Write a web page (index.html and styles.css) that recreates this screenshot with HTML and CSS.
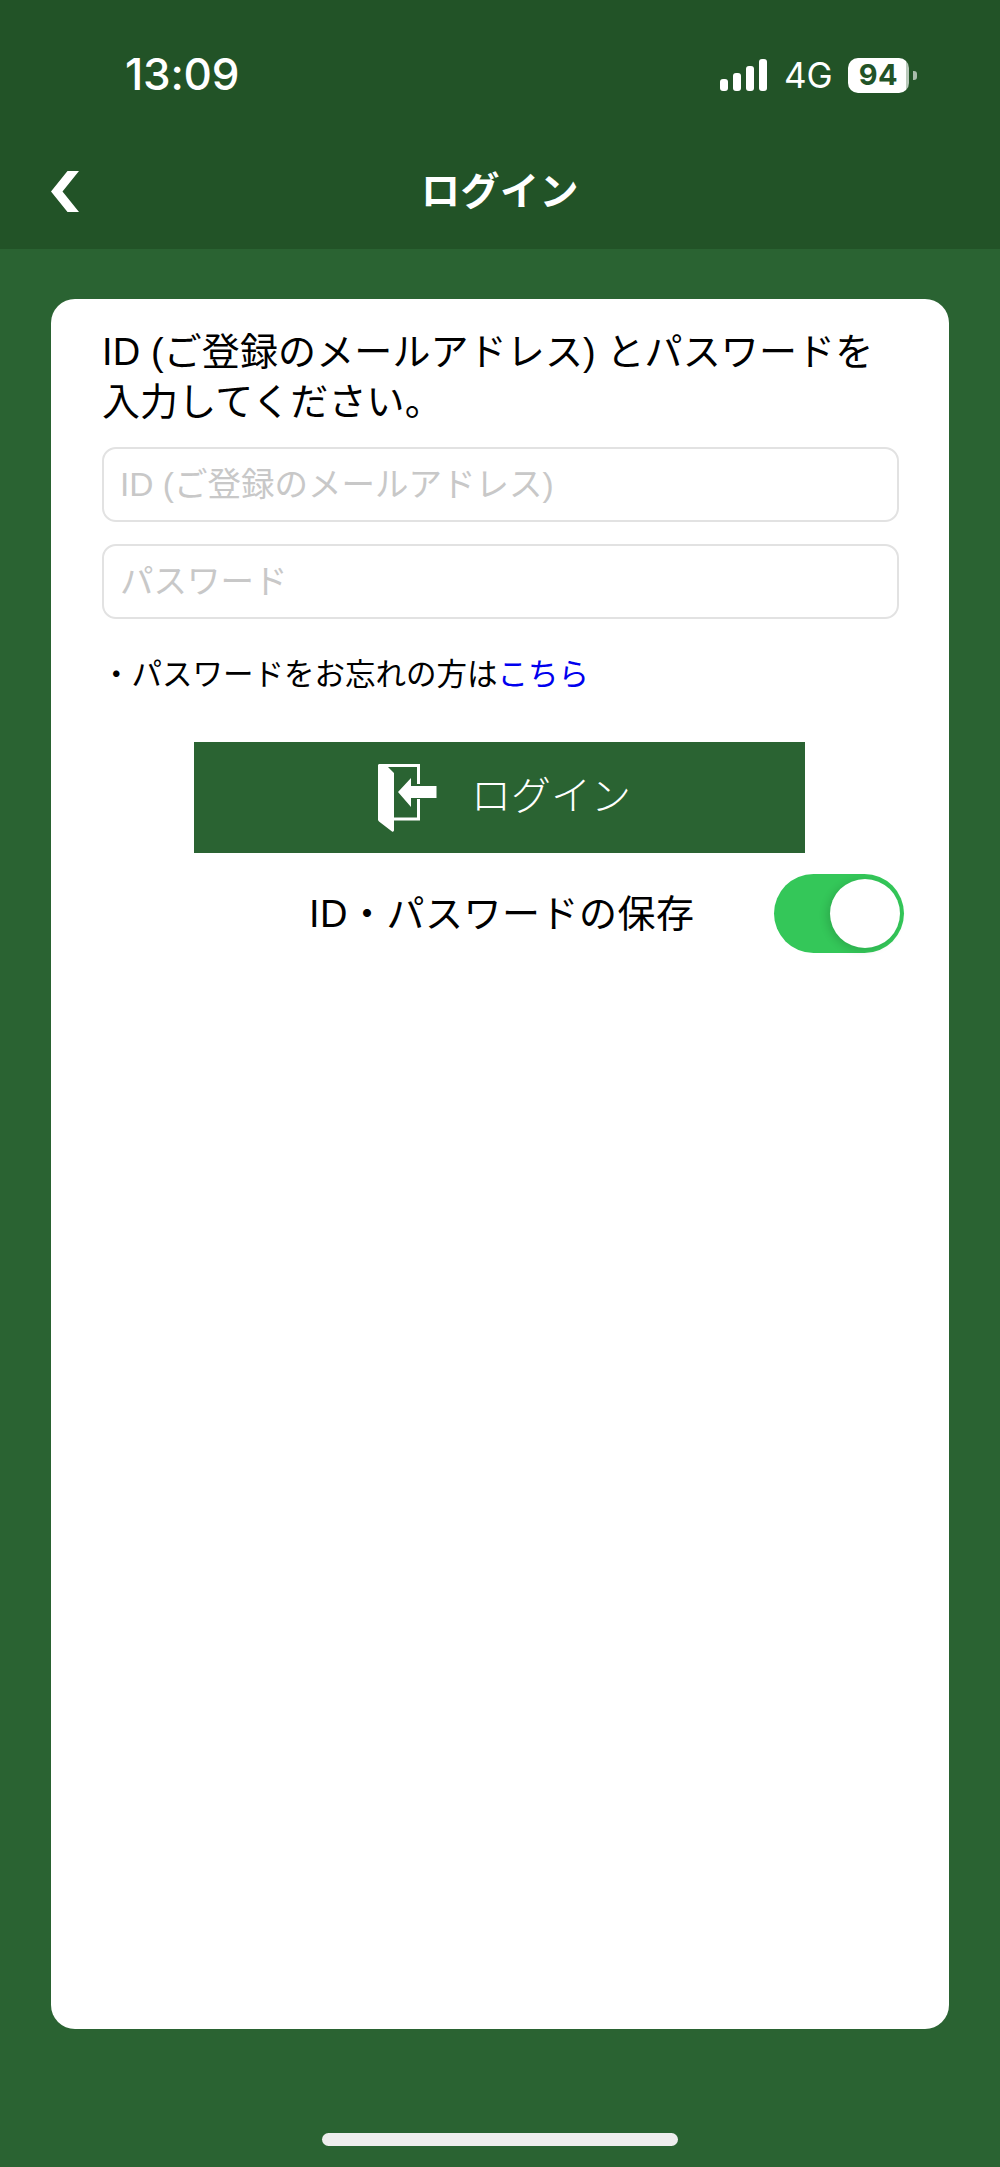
FILE: index.html
```html
<!DOCTYPE html>
<html lang="ja">
<head>
<meta charset="utf-8">
<title>ログイン</title>
<link rel="stylesheet" href="styles.css">
</head>
<body>
<div class="screen">
  <header class="top">
    <div class="status">
      <span class="time">13:09</span>
      <div class="status-right">
        <div class="signal"><i class="b1"></i><i class="b2"></i><i class="b3"></i><i class="b4"></i></div>
        <span class="net">4G</span>
        <div class="battery"><span class="battery-level">94</span></div>
        <span class="nub"></span>
      </div>
    </div>
    <div class="nav">
      <svg class="back" viewBox="0 0 28 41"><path d="M16.5 0H28L11.5 20.5 28 41H16.5L0 20.5Z" fill="#fff"/></svg>
      <h1 class="title">ログイン</h1>
    </div>
  </header>
  <main class="card">
    <p class="lead">ID (ご登録のメールアドレス) とパスワードを<br>入力してください。</p>
    <input class="field" type="text" placeholder="ID (ご登録のメールアドレス)">
    <input class="field field-second" type="password" placeholder="パスワード">
    <p class="forgot">・パスワードをお忘れの方は<a class="link" href="#">こちら</a></p>
    <div class="btn">
      <svg class="door" viewBox="0 0 60 68" fill="#fff">
        <path d="M1.5 0H42V20H39V3H10L16 9V53.500H39V35H42V56.500H16V66C16 67.500 15 68 14 67.500L1 57.500C.3 57 0 56.300 0 55.500V1.500C0 .6.6 0 1.500 0Z"/>
        <path d="M20 28 33 14V22H58.500V34H33V43Z"/>
      </svg>
      <span class="btn-label">ログイン</span>
    </div>
    <div class="save">
      <span class="save-label">ID・パスワードの保存</span>
      <div class="toggle"><span class="knob"></span></div>
    </div>
  </main>
  <div class="home"></div>
</div>
</body>
</html>
```
FILE: styles.css
```css
* { box-sizing: border-box; }
html, body { margin: 0; padding: 0; }
body {
  width: 1000px;
  height: 2167px;
  overflow: hidden;
  background: #2a6332;
  font-family: "Liberation Sans", "Noto Sans CJK JP", sans-serif;
  color: #000;
}
.screen { display: flex; flex-direction: column; height: 2167px; }
.top { height: 249px; background: #225327; color: #fff; }
.status {
  height: 150px;
  padding: 49px 83px 0 125px;
  display: flex;
  justify-content: space-between;
  align-items: flex-start;
}
.time { font-family: Inter, sans-serif; font-size: 44px; font-weight: 500; line-height: 50px; letter-spacing: -.2px; }
.status-right { display: flex; align-items: center; padding-top: 8px; }
.signal { display: flex; align-items: flex-end; gap: 5px; height: 32px; margin-right: 17px; }
.signal i { display: block; width: 8px; background: #fff; border-radius: 3px; }
.signal .b1 { height: 12px; }
.signal .b2 { height: 18px; }
.signal .b3 { height: 25px; }
.signal .b4 { height: 32px; }
.net { font-family: Inter, sans-serif; font-size: 35px; line-height: 36px; width: 64px; }
.battery {
  width: 61px;
  height: 35px;
  border-radius: 10px;
  background: linear-gradient(90deg, #fff 95%, #b9c9bb 95%);
  display: flex;
  align-items: center;
  justify-content: center;
}
.battery-level { font-family: Inter, sans-serif; font-size: 29px; font-weight: 700; color: #225327; line-height: 30px; letter-spacing: .5px; }
.nub { width: 4px; height: 9px; margin-left: 4px; background: #a9bcab; border-radius: 0 3px 3px 0; }
.nav { position: relative; height: 99px; display: flex; justify-content: center; padding-top: 11px; }
.back { position: absolute; left: 51px; top: 21px; width: 28px; height: 41px; }
.title { margin: 0; font-size: 39px; font-weight: 700; line-height: 54px; letter-spacing: .5px; font-family: "Noto Sans CJK JP", sans-serif; }
.card {
  margin: 50px 51px 0;
  height: 1730px;
  background: #fff;
  border-radius: 24px;
  padding: 28px 0 0 51px;
}
.lead { margin: 0; font-size: 38px; line-height: 50px; white-space: nowrap; letter-spacing: .12px; }
.field {
  display: block;
  width: 797px;
  height: 75px;
  margin: 20px 0 0;
  padding: 0 16px;
  border: 2px solid #e2e2e2;
  border-radius: 14px;
  background: #fff;
  font: inherit;
  font-size: 33.5px;
  outline: none;
}
.field-second { margin-top: 22px; }
.field::placeholder { color: #c8c8c8; opacity: 1; }
.forgot { margin: 34px 0 0 -1px; font-size: 30.5px; line-height: 42px; white-space: nowrap; }
.link { color: #0000ee; text-decoration: none; }
.btn {
  width: 611px;
  height: 111px;
  margin: 47px 0 0 92px;
  background: #2a6332;
  color: #fff;
  display: flex;
  align-items: center;
  padding-left: 184px;
}
.door { width: 60px; height: 68px; margin-right: 33px; }
.btn-label { font-size: 40px; line-height: 54px; margin-top: -9px; font-family: "Noto Sans CJK JP", sans-serif; font-weight: 300; }
.save { display: flex; align-items: center; height: 79px; margin: 21px 0 0 207px; }
.save-label { width: 465px; font-size: 38px; line-height: 54px; white-space: nowrap; letter-spacing: .5px; }
.toggle {
  width: 130px;
  height: 79px;
  border-radius: 40px;
  background: #34c759;
  padding: 5px 4px;
  display: flex;
  justify-content: flex-end;
}
.knob { width: 70px; height: 69px; border-radius: 50%; background: #fff; box-shadow: -3px 2px 8px rgba(0,0,0,.14); }
.home { width: 356px; height: 13px; margin: 104px auto 0; background: #eeeeee; border-radius: 7px; }
```
